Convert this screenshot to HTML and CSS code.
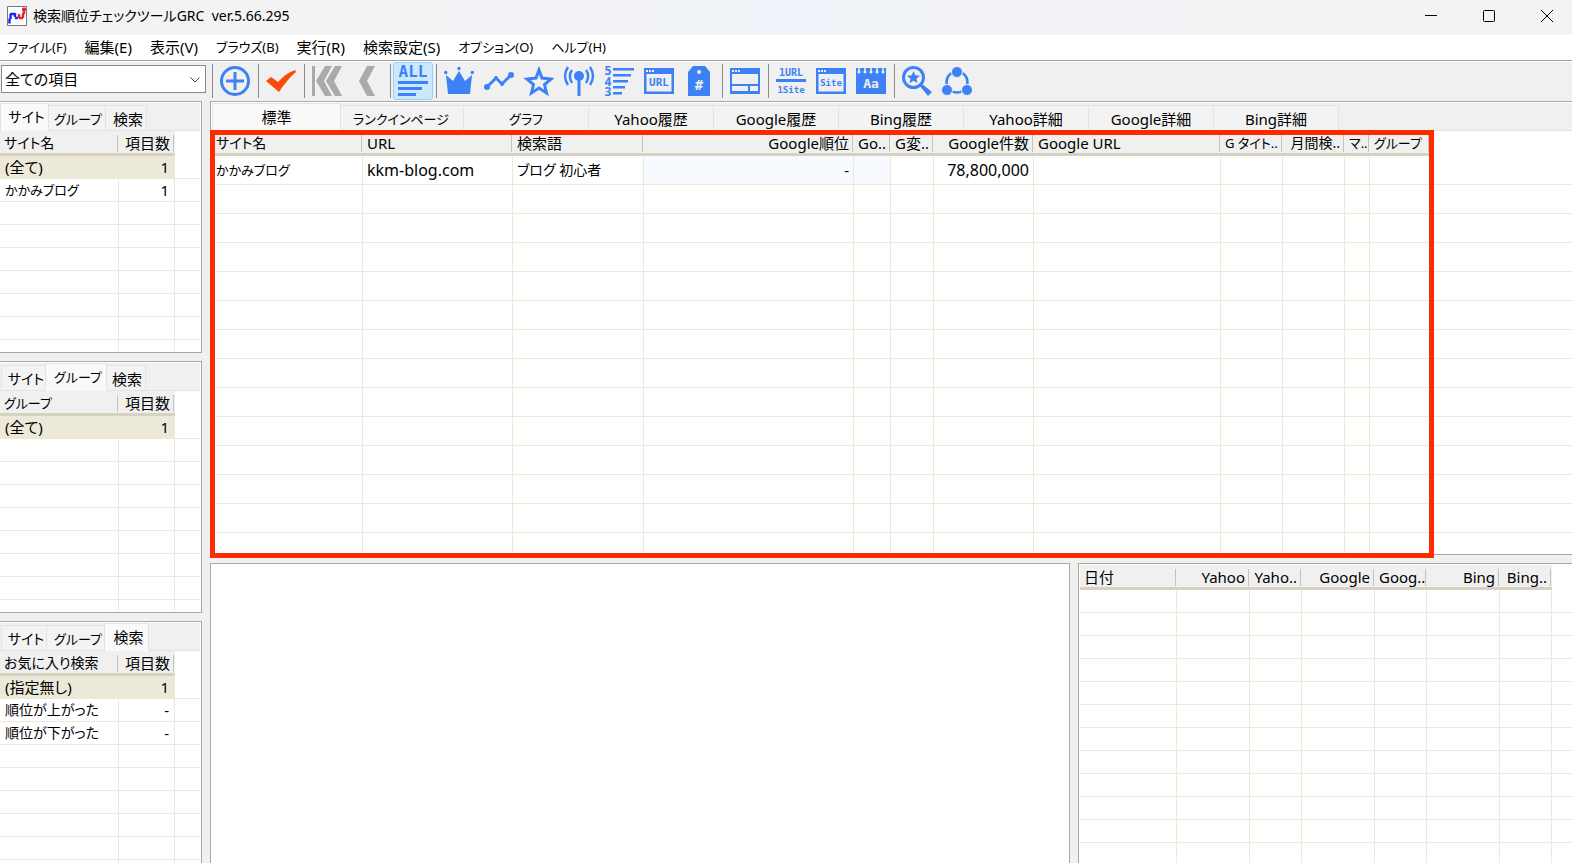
FILE: index.html
```html
<!DOCTYPE html>
<html lang="ja">
<head>
<meta charset="utf-8">
<title>検索順位チェックツールGRC</title>
<link rel="stylesheet" href="styles.css">
</head>
<body>
<header class="titlebar">
  <svg class="app-icon" width="20" height="20" viewBox="0 0 20 20" aria-hidden="true"><path fill="#fff" stroke="#777" d="M.5.5h19v19H.5z"/><path fill="none" stroke="#1c25f0" stroke-width="2.4" d="M2.500 17.500v-5M3.500 13V8M3 8h5M8 7v4M8 12h3"/><path fill="none" stroke="#e8202a" stroke-width="2.4" d="M12 8v4M12 12h4M16 12V7M17 8V1.500M15 3.500h4"/></svg>
  <h1>検索順位チェックツールGRC&nbsp; ver.5.66.295</h1>
  <div class="window-buttons">
    <button aria-label="最小化"><svg width="12" height="12" viewBox="0 0 12 12"><path d="M0 5.500h12"/></svg></button>
    <button aria-label="最大化"><svg width="12" height="12" viewBox="0 0 12 12"><rect x=".5" y=".5" width="11" height="11" rx="1"/></svg></button>
    <button aria-label="閉じる"><svg width="12" height="12" viewBox="0 0 12 12"><path d="M0 0l12 12M12 0L0 12"/></svg></button>
  </div>
</header>
<nav class="menubar">
  <button class="kana">ファイル(F)</button><button>編集(E)</button><button>表示(V)</button><button class="kana">ブラウズ(B)</button><button>実行(R)</button><button>検索設定(S)</button><button class="kana">オプション(O)</button><button class="kana">ヘルプ(H)</button>
</nav>
<div class="toolbar">
  <div class="combo">
    <select aria-label="表示項目"><option>全ての項目</option></select>
    <svg width="10" height="6" viewBox="0 0 10 6" aria-hidden="true"><path d="M.5.5L5 5 9.500.5"/></svg>
  </div>
  <div class="tools">
    <i class="sep"></i>
    <button aria-label="追加"><svg viewBox="0 0 30 30"><circle cx="15" cy="15" r="13.500" class="ln" stroke-width="3"/><path class="ln" stroke-width="3" d="M15 6v18M6 15h18"/></svg></button>
    <i class="sep"></i>
    <button aria-label="チェック"><svg viewBox="0 0 30 30"><path fill="#fb4a0b" d="M0 15l5-4 7 5C17 10 23 6 29 4l1 2C24 11 18 18 13 26z"/></svg></button>
    <i class="sep"></i>
    <button aria-label="最初"><svg viewBox="0 0 30 30"><path fill="#aaa" d="M0 0h3v30H0zM13 0h7l-8 15 8 15h-7L4 15zM23 0h7l-8 15 8 15h-7l-9-15z"/></svg></button>
    <button aria-label="前へ"><svg viewBox="0 0 30 30"><path fill="#aaa" d="M15 0h8l-8 15 8 15h-8L7 15z"/></svg></button>
    <i class="sep"></i>
    <button class="active" aria-label="すべて"><svg viewBox="0 0 30 30"><text x="15" y="11" font-size="16">ALL</text><path d="M0 15h30v3H0zM0 21h24v3H0zM0 27h18v3H0z"/></svg></button>
    <i class="sep"></i>
    <button aria-label="王冠"><svg viewBox="0 0 30 30"><path d="M2 9l7 6 6-10 6 10 7-6-2 19H4z"/><circle cx="1.700" cy="6.500" r="1.700"/><circle cx="15" cy="2.500" r="1.700"/><circle cx="28.300" cy="6.500" r="1.700"/></svg></button>
    <button aria-label="推移"><svg viewBox="0 0 30 30"><path class="ln" stroke-width="3" d="M3 21l9-9 6 6L27 9"/><circle cx="3" cy="21" r="3"/><circle cx="12" cy="12" r="2"/><circle cx="18" cy="18" r="2"/><circle cx="27" cy="9" r="3"/></svg></button>
    <button aria-label="お気に入り"><svg viewBox="0 0 30 30"><path class="ln" stroke-width="3" d="M15 4l3 8 9 1-6.500 5.500 2 8.500-7.500-5-7.500 5 2-8.500L3 13l9-1z"/></svg></button>
    <button aria-label="電波"><svg viewBox="0 0 30 30"><circle cx="15" cy="10" r="5"/><path d="M13.500 12h3v18h-3z"/><path class="ln" stroke-width="2.400" d="M8 4c-3 4-3 8 0 13M22 4c3 4 3 8 0 13M4 1c-4 6-4 12 0 18M26 1c4 6 4 12 0 18"/></svg></button>
    <button aria-label="順位"><svg viewBox="0 0 30 30"><g class="digits"><text x="4" y="9" font-size="12">5</text><text x="4" y="20" font-size="12">4</text><text x="4" y="30" font-size="12">3</text></g><path d="M9 2h21v2.500H9zM9 8h18v2.500H9zM9 14h15v2.500H9zM9 20h12v2.500H9zM9 26h9v2.500H9z"/></svg></button>
    <button aria-label="URL"><svg viewBox="0 0 30 30"><path fill-rule="evenodd" d="M0 2h30v26H0zM2.500 8v17.500h25V8zM2 4v2h2V4zM5 4v2h2V4zM8 4v2h2V4z"/><text x="15" y="20" font-size="11">URL</text></svg></button>
    <button aria-label="タグ"><svg viewBox="0 0 30 30"><path d="M9 0h12l5 6v24H4V6z"/><circle cx="15" cy="6" r="2" fill="#f0f0f0"/><text x="15" y="24" font-size="14" class="rev">#</text></svg></button>
    <i class="sep"></i>
    <button aria-label="レイアウト"><svg viewBox="0 0 30 30"><path fill-rule="evenodd" d="M0 2h30v26H0zM2 8v10h26V8zM2 20v5h16v-5zM20 20v5h8v-5zM2 4v2h2V4zM5 4v2h2V4zM8 4v2h2V4z"/></svg></button>
    <i class="sep"></i>
    <button aria-label="1URL 1Site"><svg viewBox="0 0 30 30"><text x="15" y="10" font-size="10">1URL</text><path d="M0 13h30v3H0z"/><text x="15" y="27" font-size="9">1Site</text></svg></button>
    <button aria-label="Site"><svg viewBox="0 0 30 30"><path fill-rule="evenodd" d="M0 2h30v26H0zM2.500 8v17.500h25V8zM2 4v2h2V4zM5 4v2h2V4zM8 4v2h2V4z"/><text x="15" y="20" font-size="9">Site</text></svg></button>
    <button aria-label="文字"><svg viewBox="0 0 30 30"><path d="M0 2h30v26H0z"/><path stroke="#f0f0f0" stroke-width="1.500" d="M3 2v3M9 2v3M15 2v3M21 2v3M27 2v3"/><g fill="#f0f0f0"><circle cx="3" cy="6" r="1.500"/><circle cx="9" cy="6" r="1.500"/><circle cx="15" cy="6" r="1.500"/><circle cx="21" cy="6" r="1.500"/><circle cx="27" cy="6" r="1.500"/></g><text x="15" y="22" font-size="13" class="rev">Aa</text></svg></button>
    <i class="sep"></i>
    <button aria-label="検索"><svg viewBox="0 0 30 30"><circle cx="11.500" cy="11.500" r="10" class="ln" stroke-width="3"/><path d="M19 17l11 9-4 4-9-11z"/><path d="M11.500 5l1.800 4.300 4.700.4-3.600 3 1.200 4.600-4.100-2.500-4.100 2.500 1.200-4.600-3.600-3 4.700-.4z"/></svg></button>
    <button aria-label="共有"><svg viewBox="0 0 30 30"><circle cx="15" cy="16" r="10.500" class="ln" stroke-width="2.500"/><g stroke="#f0f0f0"><circle cx="15" cy="6" r="5.500"/><circle cx="5" cy="24" r="5.500"/><circle cx="25" cy="24" r="5.500"/></g></svg></button>
  </div>
</div>
<main class="workspace">
  <aside class="sidebar">
    <section class="panel">
      <div class="tabs"><button class="tab site on">サイト</button><button class="tab group">グループ</button><button class="tab find">検索</button></div>
      <table class="list">
        <colgroup><col><col><col></colgroup>
        <thead><tr><th class="mixed">サイト名</th><th class="num">項目数</th><td></td></tr></thead>
        <tbody>
          <tr class="selected"><td>(全て)</td><td class="num">1</td><td></td></tr>
          <tr><td class="kana">かかみブログ</td><td class="num">1</td><td></td></tr>
          <tr class="blank"><td></td><td></td><td></td></tr>
        </tbody>
      </table>
    </section>
    <section class="panel">
      <div class="tabs"><button class="tab site">サイト</button><button class="tab group on">グループ</button><button class="tab find">検索</button></div>
      <table class="list">
        <colgroup><col><col><col></colgroup>
        <thead><tr><th class="kana">グループ</th><th class="num">項目数</th><td></td></tr></thead>
        <tbody>
          <tr class="selected"><td>(全て)</td><td class="num">1</td><td></td></tr>
          <tr class="blank"><td></td><td></td><td></td></tr>
        </tbody>
      </table>
    </section>
    <section class="panel">
      <div class="tabs"><button class="tab site">サイト</button><button class="tab group">グループ</button><button class="tab find on">検索</button></div>
      <table class="list">
        <colgroup><col><col><col></colgroup>
        <thead><tr><th class="mixed">お気に入り検索</th><th class="num">項目数</th><td></td></tr></thead>
        <tbody>
          <tr class="selected"><td>(指定無し)</td><td class="num">1</td><td></td></tr>
          <tr><td class="mixed">順位が上がった</td><td class="num">-</td><td></td></tr>
          <tr><td class="mixed">順位が下がった</td><td class="num">-</td><td></td></tr>
          <tr class="blank"><td></td><td></td><td></td></tr>
        </tbody>
      </table>
    </section>
  </aside>
  <div class="content">
    <section class="panel main-panel">
      <div class="tabs wide"><button class="tab on">標準</button><button class="tab kana">ランクインページ</button><button class="tab kana">グラフ</button><button class="tab">Yahoo履歴</button><button class="tab">Google履歴</button><button class="tab">Bing履歴</button><button class="tab">Yahoo詳細</button><button class="tab">Google詳細</button><button class="tab">Bing詳細</button></div>
      <table class="ranking">
        <colgroup><col><col><col><col><col><col><col><col><col><col><col><col><col></colgroup>
        <thead><tr><th class="mixed">サイト名</th><th>URL</th><th>検索語</th><th class="num">Google順位</th><th class="num">Go..</th><th class="num">G変..</th><th class="num">Google件数</th><th>Google URL</th><th class="kana">G タイト..</th><th class="num mixed">月間検..</th><th class="kana">マ..</th><th class="kana">グループ</th><td></td></tr></thead>
        <tbody>
          <tr><td class="kana">かかみブログ</td><td class="latin">kkm-blog.com</td><td class="mixed">ブログ 初心者</td><td class="num tint">-</td><td class="tint"></td><td></td><td class="num latin">78,800,000</td><td></td><td></td><td></td><td></td><td></td><td></td></tr>
          <tr class="blank"><td></td><td></td><td></td><td></td><td></td><td></td><td></td><td></td><td></td><td></td><td></td><td></td><td></td></tr>
        </tbody>
      </table>
      <div class="highlight"></div>
    </section>
    <div class="lower">
      <section class="panel preview"></section>
      <section class="panel history-panel">
        <table class="history">
          <colgroup><col><col><col><col><col><col><col><col></colgroup>
          <thead><tr><th>日付</th><th class="num">Yahoo</th><th class="num">Yaho..</th><th class="num">Google</th><th class="num">Goog..</th><th class="num">Bing</th><th class="num">Bing..</th><td></td></tr></thead>
          <tbody><tr class="blank"><td></td><td></td><td></td><td></td><td></td><td></td><td></td><td></td></tr></tbody>
        </table>
      </section>
    </div>
  </div>
</main>
</body>
</html>
```

FILE: styles.css
```css
* { box-sizing: border-box; }

body {
  margin: 0;
  height: 100vh;
  overflow: hidden;
  display: flex;
  flex-direction: column;
  background: #f0f0f0;
  color: #000;
  font: 15px/20px "Noto Sans", "Noto Sans CJK JP", sans-serif;
  font-feature-settings: "palt";
}

button, select {
  font: inherit;
  font-feature-settings: inherit;
  color: inherit;
  border: 0;
  padding: 0;
  background: none;
  white-space: nowrap;
}

/* Text scale: kana-only labels, mixed labels, latin data */
.kana { font-size: 13px; }
.mixed { font-size: 14px; }
.latin { font-size: 16px; }

/* Title bar */
.titlebar {
  flex: none;
  height: 35px;
  display: flex;
  align-items: center;
  gap: 6px;
  padding: 0 0 3px 7px;
  background: linear-gradient(90deg, #f3f3f3 15%, #f0f3f9 50%, #f3f3f3 90%);
}
.titlebar h1 { margin: 0; font-size: 14px; font-weight: 400; flex: 1; }
.window-buttons { display: flex; gap: 8px; }
.window-buttons button { width: 50px; height: 32px; display: grid; place-items: center; }
.window-buttons svg { fill: none; stroke: #000; }

/* Menu */
.menubar {
  flex: none;
  height: 26px;
  padding: 0 7px 1px;
  display: flex;
  gap: 18px;
  background: #fff;
  border-bottom: 1px solid #a0a0a0;
}

/* Toolbar */
.toolbar {
  flex: none;
  height: 40px;
  display: flex;
  border-top: 1px solid #fff;
}
.combo {
  position: relative;
  width: 205px;
  height: 28px;
  margin: 3px 3px 0 1px;
  background: #fff;
  border: 1px solid #8a8a8a;
}
.combo select {
  appearance: none;
  width: 100%;
  height: 100%;
  padding: 0 20px 1px 3px;
}
.combo svg {
  position: absolute;
  right: 5px;
  top: 11px;
  fill: none;
  stroke: #444;
  pointer-events: none;
}
.tools { display: flex; }
.tools button {
  width: 40px;
  height: 38px;
  display: grid;
  place-items: center;
  border: 1px solid transparent;
  border-radius: 3px;
}
.tools button.active { background: #cce8ff; border-color: #99d1ff; }
.tools svg { width: 30px; height: 30px; fill: #3c82f6; overflow: visible; }
.tools .ln { fill: none; stroke: #3c82f6; }
.tools text {
  font-family: "DejaVu Sans Mono", monospace;
  font-weight: 700;
  text-anchor: middle;
}
.tools .digits text { font-family: "Noto Sans", sans-serif; }
.tools .rev { fill: #f0f0f0; }
.sep { width: 6px; height: 34px; margin-top: 2px; padding-left: 3px; }
.sep::before { content: ""; display: block; width: 1px; height: 100%; background: #8a8a8a; }

/* Panels */
.workspace { flex: 1; min-height: 0; display: flex; gap: 8px; }
.panel {
  display: flex;
  flex-direction: column;
  background: #fff;
  border: 1px solid #aca899;
  overflow: hidden;
}
.sidebar {
  flex: none;
  width: 202px;
  display: grid;
  grid-auto-rows: 252px;
  gap: 8px;
}
.sidebar .panel { border-left: 0; padding: 1px 1px 1px 0; }
.content { flex: 1; min-width: 0; display: flex; flex-direction: column; gap: 8px; }
.main-panel { flex: none; height: 454px; border-right: 0; padding-top: 1px; padding-left: 1px; position: relative; overflow: visible; }
.lower { flex: 1; min-height: 0; display: flex; gap: 8px; }
.preview { flex: 1; border-bottom: 0; }
.history-panel { flex: none; width: 494px; border-width: 1px 0 0 1px; padding: 1px 0 0 1px; }

/* Tabs */
.tabs {
  flex: none;
  height: 28px;
  padding: 0 2px;
  display: flex;
  align-items: flex-end;
  background: #f0f0f0;
  border-bottom: 1px solid #e3e3e3;
}
.tab {
  height: 25px;
  padding-top: 2px;
  background: #f3f3f3;
  border: 1px solid #e3e3e3;
  border-bottom: 0;
  margin-left: -1px;
}
.tab.on { height: 28px; background: #f9f9f9; margin: 0 -2px -1px; padding-bottom: 3px; position: relative; }
.sidebar .tab { padding-left: 4px; }
.tab.site { width: 46px; font-size: 14px; }
.tab.group { width: 60px; font-size: 13px; }
.tab.find { width: 42px; }
.tab.site.on { width: 49px; }
.tab.group.on { width: 62px; }
.tab.find.on { width: 45px; }
.wide .tab { width: 126px; }
.wide .tab.on { width: 129px; }

/* Grids */
table {
  table-layout: fixed;
  border-collapse: separate;
  border-spacing: 0;
  width: 100%;
  flex: 1;
  min-height: 0;
}
th, td { padding: 0; text-align: left; font-weight: 400; white-space: nowrap; overflow: hidden; }
thead tr { height: 25px; }
th {
  padding: 2px 4px 0 4px;
  border-bottom: 3px solid #d6d2c2;
  background: linear-gradient(#c7c5b2, #c7c5b2) right 1px top 4px / 1px 17px no-repeat #f0f0f0;
}
tbody tr { height: 23px; }
tbody td { padding: 0 5px; border-right: 1px solid #ece9d8; border-bottom: 1px solid #ece9d8; }
tbody td:last-child { border-right: 0; }
th.num, td.num { text-align: right; padding-right: 5px; }
.selected td:not(:last-child) { background: #ece9d8; }
.tint { background: #f7fbff; }
.blank { height: auto; }
.blank td {
  border-bottom: 0;
  background: repeating-linear-gradient(#fff 0 22px, #ece9d8 22px 23px);
}
.list col:nth-child(1) { width: 119px; }
.list col:nth-child(2) { width: 56px; }

.ranking tbody tr { height: 29px; }
.ranking tbody td { padding: 0 4px; }
.ranking tbody .blank { height: auto; }
.ranking .blank td { background: repeating-linear-gradient(#fff 0 28px, #ece9d8 28px 29px); }
.ranking col:nth-child(1) { width: 151px; }
.ranking col:nth-child(2) { width: 150px; }
.ranking col:nth-child(3) { width: 131px; }
.ranking col:nth-child(4) { width: 210px; }
.ranking col:nth-child(5) { width: 37px; }
.ranking col:nth-child(6) { width: 43px; }
.ranking col:nth-child(7) { width: 100px; }
.ranking col:nth-child(8) { width: 187px; }
.ranking col:nth-child(9), .ranking col:nth-child(10) { width: 62px; }
.ranking col:nth-child(11) { width: 25px; }
.ranking col:nth-child(12) { width: 60px; }

.history col:nth-child(1) { width: 97px; }
.history col:nth-child(even) { width: 73px; }
.history col:nth-child(odd):not(:first-child) { width: 52px; }
.history col:last-child { width: auto; }

/* Red frame around the ranking grid */
.highlight {
  position: absolute;
  top: 28px;
  left: -1px;
  bottom: -4px;
  width: 1224px;
  border: 5px solid #ff2a00;
  pointer-events: none;
}
```
